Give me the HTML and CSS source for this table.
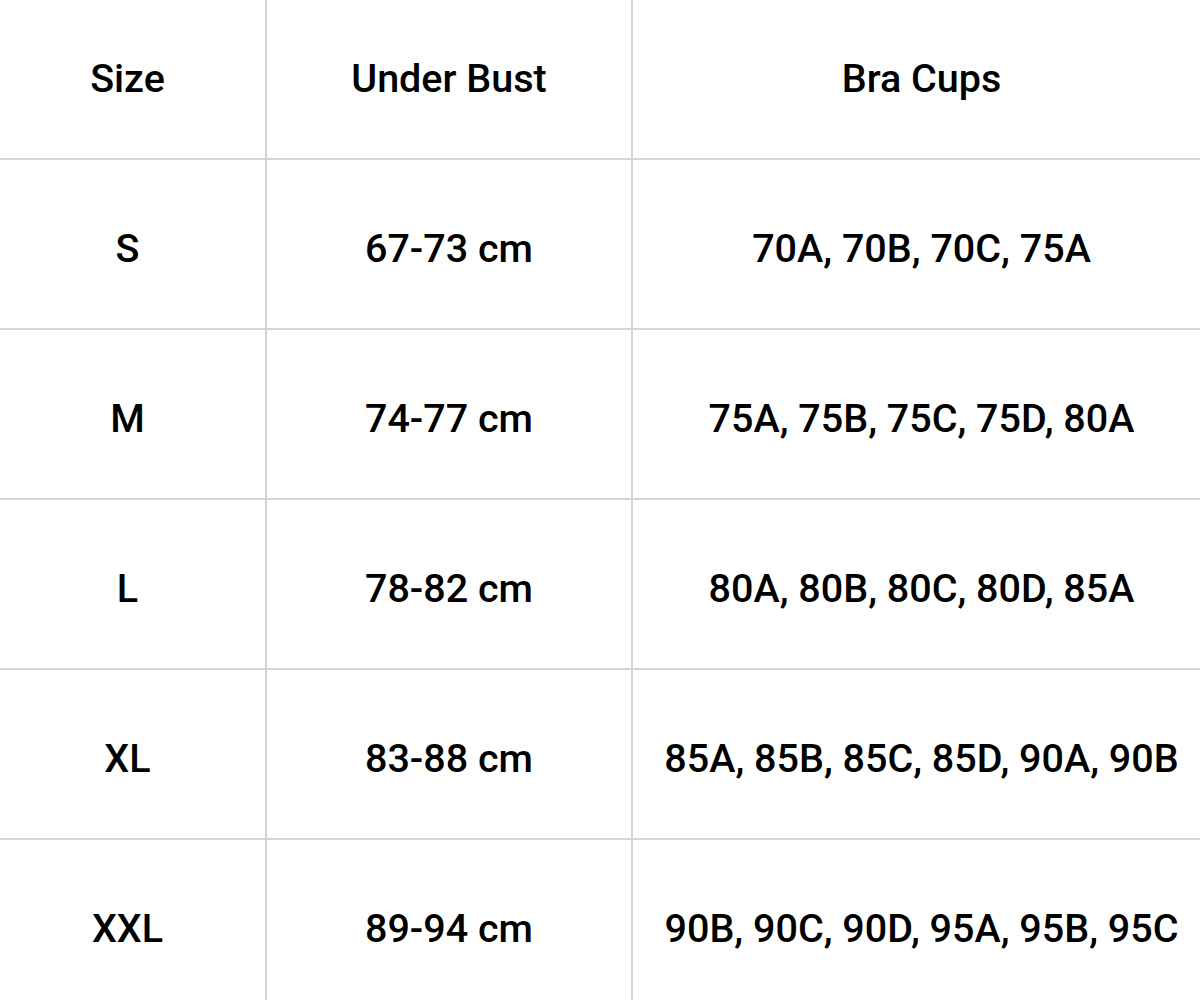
FILE: index.html
```html
<!DOCTYPE html>
<html>
<head>
<meta charset="utf-8">
<link rel="stylesheet" href="styles.css">
</head>
<body>
<div class="table">
  <div class="cell head">Size</div>
  <div class="cell head">Under Bust</div>
  <div class="cell head last">Bra Cups</div>

  <div class="cell">S</div>
  <div class="cell">67-73 cm</div>
  <div class="cell last">70A, 70B, 70C, 75A</div>

  <div class="cell">M</div>
  <div class="cell">74-77 cm</div>
  <div class="cell last">75A, 75B, 75C, 75D, 80A</div>

  <div class="cell">L</div>
  <div class="cell">78-82 cm</div>
  <div class="cell last">80A, 80B, 80C, 80D, 85A</div>

  <div class="cell">XL</div>
  <div class="cell">83-88 cm</div>
  <div class="cell last">85A, 85B, 85C, 85D, 90A, 90B</div>

  <div class="cell">XXL</div>
  <div class="cell">89-94 cm</div>
  <div class="cell last">90B, 90C, 90D, 95A, 95B, 95C</div>
</div>
</body>
</html>
```
FILE: styles.css
```css
html, body {
  margin: 0;
  padding: 0;
  background: #fff;
  overflow: hidden;
}
.table {
  display: grid;
  grid-template-columns: 277px 366px 1fr;
  grid-auto-rows: 170px;
  width: 1220px;
  margin: -10px 0 0 -10px;
  font-family: Roboto, "Noto Sans", sans-serif;
  font-weight: 500;
  font-size: 39.5px;
  color: #000;
}
.cell {
  box-sizing: border-box;
  display: flex;
  align-items: center;
  justify-content: center;
  border-right: 2px solid #d4d4d4;
  border-bottom: 2px solid #d4d4d4;
  padding-top: 8px;
  white-space: nowrap;
}
.cell.last {
  border-right: none;
}
.head {
  font-size: 39.5px;
}
```
